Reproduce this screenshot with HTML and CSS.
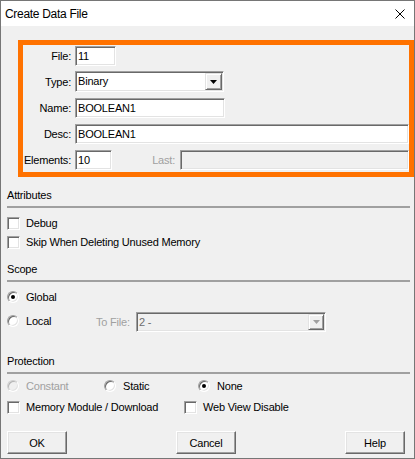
FILE: index.html
```html
<!DOCTYPE html>
<html>
<head>
<meta charset="utf-8">
<link rel="stylesheet" href="styles.css">
</head>
<body>
<div class="window">
  <div class="titlebar">
    <span class="title">Create Data File</span>
    <svg class="close" width="10" height="10" viewBox="0 0 10 10"><path d="M0.5 0.5 L9.5 9.5 M9.5 0.5 L0.5 9.5" stroke="#000" stroke-width="1" fill="none"/></svg>
  </div>
  <div class="content">
    <div class="highlight">
      <div class="frow">
        <span class="lbl">File:</span>
        <div class="field w-file">11</div>
      </div>
      <div class="frow r-type">
        <span class="lbl">Type:</span>
        <div class="field select w-type">
          <span class="val">Binary</span>
          <span class="dd"><svg width="7" height="4" viewBox="0 0 7 4"><path d="M0 0 H7 L3.5 4 Z" fill="#000"/></svg></span>
        </div>
      </div>
      <div class="frow">
        <span class="lbl">Name:</span>
        <div class="field w-name">BOOLEAN1</div>
      </div>
      <div class="frow">
        <span class="lbl">Desc:</span>
        <div class="field grow">BOOLEAN1</div>
      </div>
      <div class="frow">
        <span class="lbl">Elements:</span>
        <div class="field w-elem">10</div>
        <span class="lastlbl">Last:</span>
        <div class="field grow disabled"></div>
      </div>
    </div>

    <div class="sec-title first">Attributes</div>
    <div class="sep"></div>
    <div class="crow r-debug"><span class="cb"></span><span>Debug</span></div>
    <div class="crow r-skip"><span class="cb"></span><span>Skip When Deleting Unused Memory</span></div>

    <div class="sec-title scope">Scope</div>
    <div class="sep"></div>
    <div class="rrow r-global"><span class="rb on"></span><span class="rtext">Global</span></div>
    <div class="rrow r-local">
      <div class="ritem w-local"><span class="rb"></span><span class="rtext">Local</span></div>
      <span class="tofile">To File:</span>
      <div class="field select sel2 disabled">
        <span class="val gray">2 -</span>
        <span class="dd dd-small"><svg width="7" height="4" viewBox="0 0 7 4"><path d="M0 0 H7 L3.5 4 Z" fill="#a0a0a0"/></svg></span>
      </div>
    </div>

    <div class="sec-title prot">Protection</div>
    <div class="sep"></div>
    <div class="rrow r-const">
      <div class="ritem w-const dis"><span class="rb off"></span><span class="rtext">Constant</span></div>
      <div class="ritem w-static"><span class="rb"></span><span class="rtext">Static</span></div>
      <div class="ritem"><span class="rb on"></span><span class="rtext">None</span></div>
    </div>
    <div class="crow r-mem">
      <div class="ritem w-mem"><span class="cb"></span><span>Memory Module / Download</span></div>
      <div class="ritem"><span class="cb"></span><span>Web View Disable</span></div>
    </div>

    <div class="buttons">
      <div class="btn">OK</div>
      <div class="btn">Cancel</div>
      <div class="btn">Help</div>
    </div>
  </div>
</div>
</body>
</html>
```

FILE: styles.css
```css
* { box-sizing: border-box; }
html, body { margin: 0; padding: 0; }
body {
  width: 415px;
  height: 459px;
  font-family: "Liberation Sans", Arial, sans-serif;
  font-size: 11px;
  letter-spacing: -0.2px;
  color: #000;
  background: #f0f0f0;
  overflow: hidden;
}
.window {
  width: 415px;
  height: 459px;
  border: 1px solid #767676;
  background: #f0f0f0;
  display: flex;
  flex-direction: column;
  overflow: hidden;
}
.titlebar {
  height: 25px;
  flex: none;
  background: #fff;
  display: flex;
  align-items: center;
  justify-content: space-between;
  padding: 0 9px 0 4px;
}
.title { font-size: 12px; letter-spacing: -0.3px; }
.close { display: block; }

.content {
  flex: 1;
  padding: 14px 4px 0 6px;
}
.highlight {
  margin-left: 11px;
  margin-right: -4px;
  border: 5px solid #ff7200;
  padding: 1px 0 2px 0;
}
.frow {
  display: flex;
  align-items: center;
  height: 20px;
}
.frow + .frow { margin-top: 6px; }
.frow.r-type { height: 21px; margin-top: 5px; }
.lbl {
  width: 48px;
  margin-right: 4px;
  text-align: right;
  flex: none;
}
.field {
  height: 20px;
  background: #fff;
  border: 1px solid;
  border-color: #a0a0a0 #fff #fff #a0a0a0;
  box-shadow: inset 1px 1px 0 #696969, inset -1px -1px 0 #e3e3e3;
  padding: 0 0 0 2px;
  display: flex;
  align-items: center;
  line-height: 13px;
  flex: none;
}
.field.disabled { background: #f0f0f0; }
.w-file { width: 41px; }
.w-type { width: 149px; height: 21px; }
.w-name { width: 150px; }
.w-elem { width: 37px; }
.grow { flex: 1; }
.lastlbl {
  width: 68px;
  padding-right: 5px;
  text-align: right;
  color: #a0a0a0;
  flex: none;
}
.select {
  justify-content: space-between;
  padding-right: 1px;
}
.dd {
  width: 17px;
  height: 17px;
  background: #f0f0f0;
  border: 1px solid;
  border-color: #e3e3e3 #696969 #696969 #e3e3e3;
  box-shadow: inset 1px 1px 0 #fff, inset -1px -1px 0 #a0a0a0;
  display: flex;
  align-items: center;
  justify-content: center;
  flex: none;
}
.dd svg { display: block; }
.dd-small { width: 16px; height: 16px; }

.sec-title { height: 13px; line-height: 13px; }
.sec-title.first { margin-top: 12px; }
.sec-title.scope { margin-top: 14px; }
.sec-title.prot { margin-top: 23px; }
.sep { height: 2px; margin-top: 4px; background: #a0a0a0; }

.crow { display: flex; align-items: center; height: 13px; line-height: 13px; }
.r-debug { margin-top: 9px; }
.r-skip { margin-top: 6px; }
.r-mem { margin-top: 9px; }
.cb {
  width: 13px;
  height: 13px;
  background: #fff;
  border: 1px solid;
  border-color: #a0a0a0 #fff #fff #a0a0a0;
  box-shadow: inset 1px 1px 0 #696969, inset -1px -1px 0 #e3e3e3;
  margin-right: 6px;
  flex: none;
}

.rrow { display: flex; align-items: center; height: 12px; }
.rtext { line-height: 12px; }
.r-global { margin-top: 9px; }
.r-local { margin-top: 9px; height: 20px; }
.r-const { margin-top: 6px; }
.ritem { display: flex; align-items: center; flex: none; }
.w-local { width: 89px; margin-top: 3px; align-self: flex-start; }
.w-const { width: 97px; }
.w-static { width: 94px; }
.w-mem { width: 177px; }
.rb {
  width: 12px;
  height: 12px;
  border-radius: 50%;
  background: #fff;
  border: 1px solid;
  border-color: #a0a0a0 #fff #fff #a0a0a0;
  box-shadow: inset 1px 1px 0 #696969, inset -1px -1px 0 #e3e3e3;
  margin-right: 7px;
  flex: none;
  display: flex;
  align-items: center;
  justify-content: center;
}
.rb.on::after {
  content: "";
  width: 4px;
  height: 4px;
  border-radius: 50%;
  background: #000;
}
.rb.off {
  background: #f0f0f0;
  border-color: #d0d0d0 #fff #fff #d0d0d0;
  box-shadow: inset 1px 1px 0 #b4b4b4, inset -1px -1px 0 #e3e3e3;
}
.dis .rtext { color: #a0a0a0; }
.tofile {
  width: 40px;
  color: #a0a0a0;
  align-self: flex-start;
  margin-top: 4px;
  line-height: 12px;
}
.sel2 { width: 190px; height: 20px; align-self: flex-start; padding-right: 1px; }
.gray { color: #6d6d6d; }

.buttons {
  display: flex;
  justify-content: space-between;
  margin-top: 17px;
  margin-right: 5px;
  padding-left: 1px;
  margin-left: -1px;
}
.buttons { padding-left: 0; margin-left: 0; }
.btn {
  width: 60px;
  height: 23px;
  background: #f0f0f0;
  border: 1px solid;
  border-color: #fff #696969 #696969 #fff;
  box-shadow: inset -1px -1px 0 #a0a0a0, inset 1px 1px 0 #e3e3e3;
  display: flex;
  align-items: center;
  justify-content: center;
}
```
